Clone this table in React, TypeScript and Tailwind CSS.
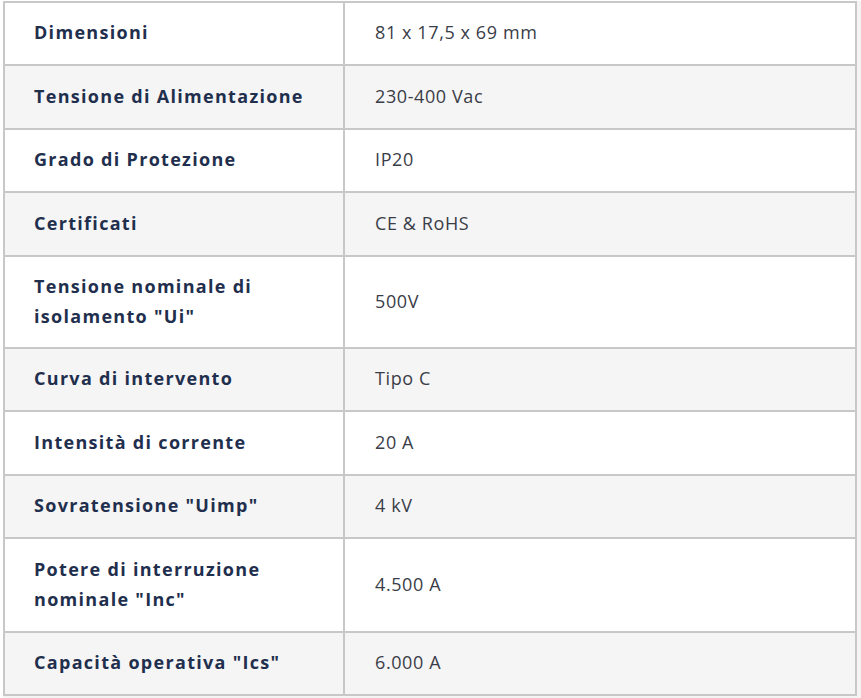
import React from "react";

const rows: { k: string[]; v: string; h: string; bg: string }[] = [
  { k: ["Dimensioni"], v: "81 x 17,5 x 69 mm", h: "h-[63px]", bg: "bg-white" },
  { k: ["Tensione di Alimentazione"], v: "230-400 Vac", h: "h-[64px]", bg: "bg-[#f5f5f5]" },
  { k: ["Grado di Protezione"], v: "IP20", h: "h-[63px]", bg: "bg-white" },
  { k: ["Certificati"], v: "CE & RoHS", h: "h-[64px]", bg: "bg-[#f5f5f5]" },
  { k: ["Tensione nominale di", 'isolamento "Ui"'], v: "500V", h: "h-[92px]", bg: "bg-white" },
  { k: ["Curva di intervento"], v: "Tipo C", h: "h-[63px]", bg: "bg-[#f5f5f5]" },
  { k: ["Intensità di corrente"], v: "20 A", h: "h-[64px]", bg: "bg-white" },
  { k: ['Sovratensione "Uimp"'], v: "4 kV", h: "h-[63px]", bg: "bg-[#f5f5f5]" },
  { k: ["Potere di interruzione", 'nominale "Inc"'], v: "4.500 A", h: "h-[94px]", bg: "bg-white" },
  { k: ['Capacità operativa "Ics"'], v: "6.000 A", h: "h-[63px]", bg: "bg-[#f5f5f5]" },
];

export default function App() {
  return (
    <div
      className="w-[861px] h-[698px] bg-[#f4f4f4] border-l-[3px] border-t-[1px] border-white overflow-hidden"
      style={{ fontFamily: '"Open Sans", sans-serif' }}
    >
      <div className="w-[854px] border-l-2 border-r-2 border-b-2 border-[#c8c8c8]">
        {rows.map((r, i) => (
          <div key={i} className={`flex border-t-2 border-[#c8c8c8] ${r.bg} ${r.h}`}>
            <div className="w-[340px] shrink-0 border-r-2 border-[#c8c8c8] flex items-center pl-[29px] pb-[3px] text-[18px] font-bold leading-[30px] text-[#1f2f4d] tracking-[1.3px]">
              <div>
                {r.k.map((l, j) => (
                  <div key={j}>{l}</div>
                ))}
              </div>
            </div>
            <div className="flex-1 flex items-center pl-[30px] pb-[3px] text-[18px] leading-[30px] text-[#3a3d48] tracking-[0.6px]">
              {r.v}
            </div>
          </div>
        ))}
      </div>
    </div>
  );
}
